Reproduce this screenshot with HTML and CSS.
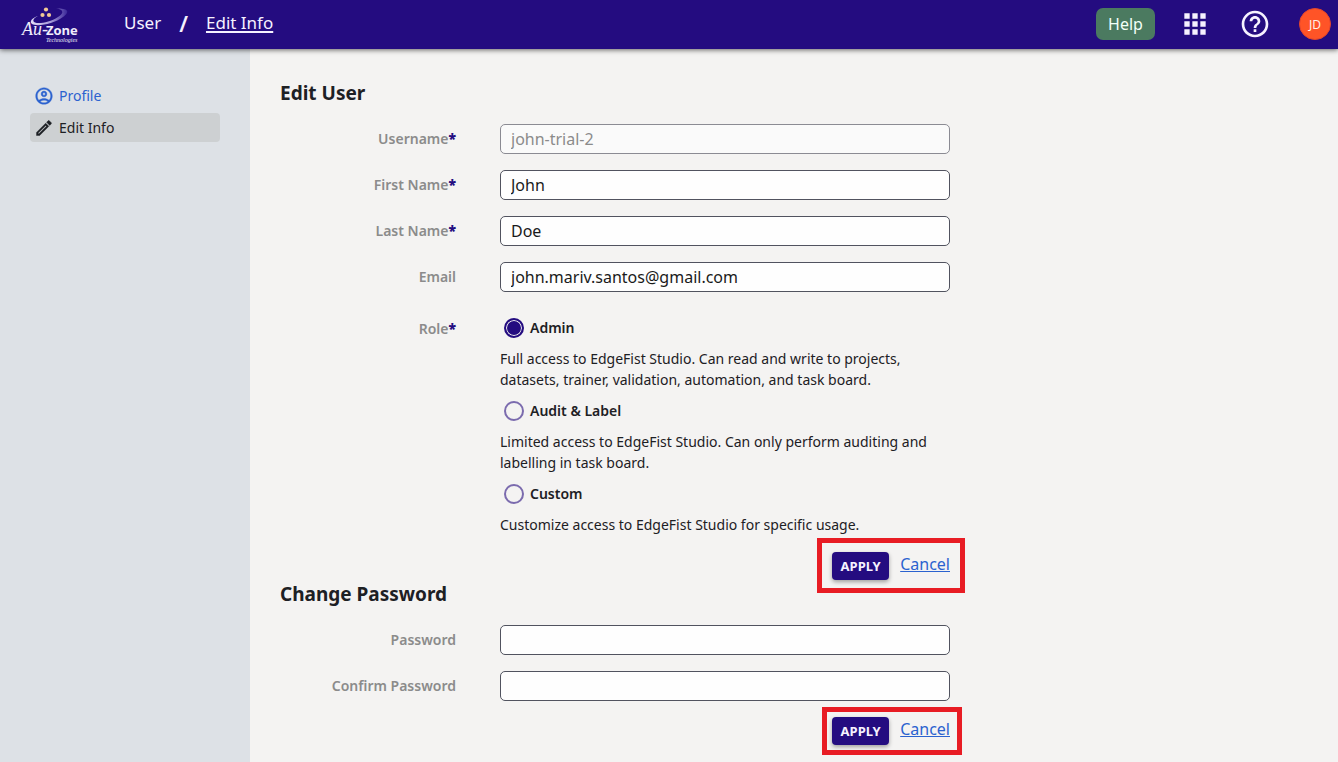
FILE: index.html
```html
<!DOCTYPE html>
<html lang="en">
<head>
<meta charset="utf-8">
<meta name="viewport" content="width=device-width, initial-scale=1">
<title>Edit Info</title>
<link rel="stylesheet" href="styles.css">
</head>
<body>
<header class="topbar">
  <a class="logo" href="#" aria-label="Au-Zone Technologies">
    <svg width="60" height="42" viewBox="0 0 60 42">
      <defs>
        <linearGradient id="swoosh" x1="0" x2="1">
          <stop offset="0" stop-color="#e4def8"/>
          <stop offset=".55" stop-color="#a79ad8"/>
          <stop offset="1" stop-color="#3a2798"/>
        </linearGradient>
      </defs>
      <path fill="url(#swoosh)" d="M18 12C12 14 9 17.500 12 20C17 23 34 20 43 13C50 8 49 4 36 4.500C43 5 45 9 38 13C30 18.500 19 20 15 18.500C12 17 13 14.500 18 12Z"/>
      <g fill="#f3c995">
        <circle cx="26" cy="5.500" r="2.100"/>
        <circle cx="22.500" cy="11" r="2.100"/>
        <circle cx="29" cy="11" r="2.100"/>
      </g>
      <text class="logo-au" x="2" y="31">Au-</text>
      <text class="logo-zone" x="26" y="31">Zone</text>
      <text class="logo-tech" x="26" y="38">Technologies</text>
    </svg>
  </a>
  <nav class="crumbs" aria-label="Breadcrumb">
    <a href="#">User</a>
    <span class="slash">/</span>
    <a class="current" href="#">Edit Info</a>
  </nav>
  <div class="tools">
    <button class="help" type="button">Help</button>
    <button class="icon-button" type="button" aria-label="Apps">
      <svg width="32" height="32" viewBox="0 0 24 24" fill="currentColor"><path d="M4 8h4V4H4v4zm6 12h4v-4h-4v4zm-6 0h4v-4H4v4zm0-6h4v-4H4v4zm6 0h4v-4h-4v4zm6-10v4h4V4h-4zm-6 4h4V4h-4v4zm6 6h4v-4h-4v4zm0 6h4v-4h-4v4z"/></svg>
    </button>
    <button class="icon-button" type="button" aria-label="Support">
      <svg width="32" height="32" viewBox="0 0 24 24" fill="currentColor"><path d="M11 18h2v-2h-2v2zm1-16C6.480 2 2 6.480 2 12s4.480 10 10 10 10-4.480 10-10S17.520 2 12 2zm0 18c-4.410 0-8-3.590-8-8s3.590-8 8-8 8 3.590 8 8-3.590 8-8 8zm0-14c-2.210 0-4 1.790-4 4h2c0-1.100.9-2 2-2s2 .9 2 2c0 2-3 1.750-3 5h2c0-2.250 3-2.500 3-5 0-2.210-1.790-4-4-4z"/></svg>
    </button>
    <button class="avatar" type="button">JD</button>
  </div>
</header>
<div class="shell">
  <nav class="sidebar" aria-label="User">
    <a class="side-link" href="#">
      <svg width="20" height="20" viewBox="0 0 24 24" fill="currentColor" stroke="currentColor" stroke-width=".4"><path d="M12 2C6.480 2 2 6.480 2 12s4.480 10 10 10 10-4.480 10-10S17.520 2 12 2zM7.350 18.500C8.660 17.560 10.260 17 12 17s3.340.56 4.650 1.500C15.340 19.440 13.740 20 12 20s-3.340-.56-4.650-1.500zm10.790-1.380C16.450 15.800 14.320 15 12 15s-4.450.8-6.140 2.120C4.700 15.730 4 13.950 4 12c0-4.420 3.580-8 8-8s8 3.580 8 8c0 1.950-.7 3.730-1.860 5.120zM12 6c-1.930 0-3.500 1.570-3.500 3.500S10.070 13 12 13s3.500-1.570 3.500-3.500S13.930 6 12 6zm0 5c-.83 0-1.500-.67-1.500-1.500S11.170 8 12 8s1.500.67 1.500 1.500S12.830 11 12 11z"/></svg>
      <span>Profile</span>
    </a>
    <a class="side-link active" href="#" aria-current="page">
      <svg width="20" height="20" viewBox="0 0 24 24" fill="currentColor" stroke="currentColor" stroke-width=".5"><path d="M3 17.250V21h3.750L17.810 9.940l-3.750-3.750L3 17.250zM5.920 19H5v-.92l9.060-9.060.92.92L5.920 19zM20.710 5.630l-2.340-2.340c-.2-.2-.45-.29-.71-.29s-.51.1-.7.290l-1.830 1.830 3.750 3.750 1.830-1.830c.39-.39.39-1.020 0-1.410z"/></svg>
      <span>Edit Info</span>
    </a>
  </nav>
  <main class="content">
    <form class="panel">
      <h2>Edit User</h2>
      <div class="fields">
        <label for="username">Username<b>*</b></label>
        <input class="field" id="username" type="text" value="john-trial-2" disabled>
        <label for="first">First Name<b>*</b></label>
        <input class="field" id="first" type="text" value="John">
        <label for="last">Last Name<b>*</b></label>
        <input class="field" id="last" type="text" value="Doe">
        <label for="email">Email</label>
        <input class="field" id="email" type="email" value="john.mariv.santos@gmail.com">
        <div class="role-label" id="role">Role<b>*</b></div>
        <div class="roles" role="radiogroup" aria-labelledby="role">
          <label class="role"><input type="radio" name="role" checked>Admin</label>
          <p>Full access to EdgeFist Studio. Can read and write to projects, datasets, trainer, validation, automation, and task board.</p>
          <label class="role"><input type="radio" name="role">Audit &amp; Label</label>
          <p>Limited access to EdgeFist Studio. Can only perform auditing and labelling in task board.</p>
          <label class="role"><input type="radio" name="role">Custom</label>
          <p>Customize access to EdgeFist Studio for specific usage.</p>
        </div>
      </div>
      <div class="actions">
        <button class="apply" type="button">APPLY</button>
        <a class="cancel" href="#">Cancel</a>
        <span class="highlight highlight-large"></span>
      </div>
    </form>
    <form class="panel">
      <h2>Change Password</h2>
      <div class="fields">
        <label for="password">Password</label>
        <input class="field" id="password" type="password">
        <label for="confirm">Confirm Password</label>
        <input class="field" id="confirm" type="password">
      </div>
      <div class="actions">
        <button class="apply" type="button">APPLY</button>
        <a class="cancel" href="#">Cancel</a>
        <span class="highlight"></span>
      </div>
    </form>
  </main>
</div>
</body>
</html>
```
FILE: styles.css
```css
* {
  box-sizing: border-box;
}

body {
  margin: 0;
  min-height: 100vh;
  display: flex;
  flex-direction: column;
  background: #f4f3f2;
  color: #1d2024;
  font-family: "Noto Sans", "Open Sans", sans-serif;
  font-size: 14px;
}

button {
  border: 0;
  padding: 0;
  font-family: inherit;
  cursor: pointer;
}

svg {
  display: block;
  flex: none;
}

.topbar {
  position: relative;
  display: flex;
  align-items: center;
  height: 49px;
  padding: 0 7px 0 20px;
  background: #240c80;
  color: #f6f2ff;
  box-shadow: 0 1px 5px rgba(0, 0, 0, 0.6);
}

.logo text {
  fill: #f0ecfb;
}

.logo .logo-au {
  font: italic 18px "Liberation Serif", serif;
}

.logo .logo-zone {
  font: bold 13px "Open Sans", sans-serif;
}

.logo .logo-tech {
  font: italic 6px "Liberation Serif", serif;
}

.crumbs {
  display: flex;
  align-items: center;
  gap: 18px;
  margin-left: 44px;
  padding-bottom: 3px;
  font-size: 17px;
  line-height: 24px;
}

.crumbs a {
  color: inherit;
  text-decoration: none;
}

.crumbs .current {
  text-decoration: underline;
  text-decoration-thickness: 2px;
  text-underline-offset: 2px;
}

.slash {
  font-size: 22px;
  font-weight: 600;
}

.tools {
  display: flex;
  align-items: center;
  margin-left: auto;
  padding-bottom: 1px;
}

.help {
  width: 59px;
  height: 32px;
  margin-right: 24px;
  border-radius: 7px;
  background: #4b7a60;
  color: #f4fff8;
  font-size: 16px;
}

.icon-button {
  margin-right: 28px;
  background: none;
  color: #f6f2ff;
}

.avatar {
  width: 32px;
  height: 32px;
  border: 1px solid #e2452c;
  border-radius: 50%;
  background: #ff5427;
  color: #fff0e8;
  font-size: 12px;
}

.shell {
  display: flex;
  flex: 1;
}

.sidebar {
  flex: 0 0 250px;
  display: flex;
  flex-direction: column;
  gap: 3px;
  padding: 32px 30px;
  background: #dde1e6;
}

.side-link {
  display: flex;
  align-items: center;
  gap: 5px;
  height: 29px;
  padding-left: 4px;
  border-radius: 4px;
  color: #2b62cf;
  text-decoration: none;
}

.side-link.active {
  background: #cdd0d2;
  color: #1d2024;
}

.content {
  flex: 1;
  padding: 32px 30px 16px;
}

.panel {
  max-width: 670px;
  margin-bottom: 2px;
}

h2 {
  margin: 0 0 19px;
  font-size: 19px;
  font-weight: 700;
  line-height: 24px;
}

.fields {
  display: grid;
  grid-template-columns: 176px minmax(0, 1fr);
  gap: 16px 44px;
  line-height: 30px;
}

.fields > label,
.role-label {
  color: #8b8b8b;
  font-weight: 600;
  text-align: right;
}

.role-label {
  padding-top: 6px;
}

.fields b {
  color: #240c80;
}

.field {
  width: 100%;
  height: 30px;
  padding: 0 10px;
  border: 1px solid #51535f;
  border-radius: 5px;
  background: #fefefe;
  color: #1a1a1a;
  font-family: inherit;
  font-size: 16px;
}

.field:disabled {
  border-color: #8b8b93;
  background: #fafafa;
  color: #8b8b8b;
}

.role {
  display: flex;
  align-items: center;
  gap: 6px;
  height: 40px;
  padding-left: 4px;
  font-weight: 600;
}

.role input {
  appearance: none;
  width: 20px;
  height: 20px;
  margin: 0;
  border: 2px solid #7b6bae;
  border-radius: 50%;
}

.role input:checked {
  border-color: #240c80;
  background: #240c80;
  box-shadow: inset 0 0 0 1px #f4f3f2;
}

.roles p {
  margin: 0 0 1px;
  line-height: 21px;
}

.actions {
  position: relative;
  display: flex;
  justify-content: flex-end;
  gap: 11px;
  margin-top: 16px;
}

.apply {
  width: 57px;
  height: 28px;
  border-radius: 4px;
  background: #240c80;
  color: #f6f2ff;
  font-size: 13px;
  font-weight: 700;
  box-shadow: 0 2px 4px rgba(0, 0, 0, 0.35);
}

.cancel {
  color: #2b62cf;
  font-size: 16px;
  line-height: 24px;
}

.highlight {
  position: absolute;
  top: -10px;
  right: -12px;
  width: 140px;
  height: 48px;
  border: 5px solid #e81c24;
  pointer-events: none;
}

.highlight-large {
  top: -14px;
  right: -15px;
  width: 148px;
  height: 55px;
}
```
